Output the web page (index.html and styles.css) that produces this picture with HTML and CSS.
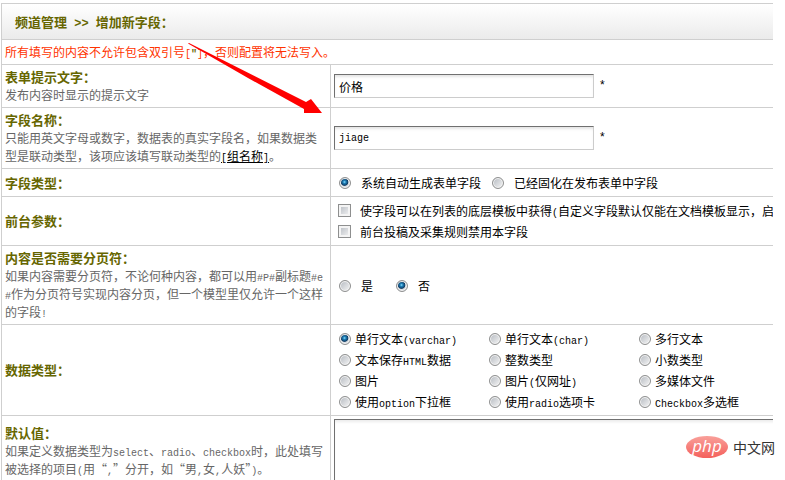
FILE: index.html
```html
<!DOCTYPE html>
<html lang="zh-CN">
<head>
    <meta charset="UTF-8">
    <meta name="viewport" content="width=device-width, initial-scale=1.0">
    <title>增加新字段</title>
    <link rel="stylesheet" href="styles.css">
</head>
<body>
    <form class="sheet">
        <table class="field-table">
            <colgroup>
                <col class="col-label">
                <col>
            </colgroup>
            <thead>
                <tr class="title-row">
                    <th colspan="2">频道管理<span class="en"> &gt;&gt; </span>增加新字段：</th>
                </tr>
            </thead>
            <tbody>
                <tr>
                    <td colspan="2" class="warning">所有填写的内容不允许包含双引号<span class="en">[<b>"</b>]</span>，否则配置将无法写入。</td>
                </tr>
                <tr>
                    <td>
                        <label class="name" for="itemname">表单提示文字：</label>
                        <p>发布内容时显示的提示文字</p>
                    </td>
                    <td><input type="text" class="text" id="itemname" value="价格"> <span class="star">*</span></td>
                </tr>
                <tr>
                    <td>
                        <label class="name" for="fieldname">字段名称：</label>
                        <p>只能用英文字母或数字，数据表的真实字段名，如果数据类型是联动类型，该项应该填写联动类型的<a href="#"><span class="en">[</span>组名称<span class="en">]</span></a>。</p>
                    </td>
                    <td><input type="text" class="text latin" id="fieldname" value="jiage"> <span class="star">*</span></td>
                </tr>
                <tr>
                    <td><span class="name">字段类型：</span></td>
                    <td>
                        <div class="choices">
                            <label class="wide"><input type="radio" name="autofield" checked>系统自动生成表单字段</label>
                            <label class="wide"><input type="radio" name="autofield">已经固化在发布表单中字段</label>
                        </div>
                    </td>
                </tr>
                <tr>
                    <td><span class="name">前台参数：</span></td>
                    <td>
                        <label class="wide"><input type="checkbox" name="islist">使字段可以在列表的底层模板中获得<span class="en">(</span>自定义字段默认仅能在文档模板显示，启</label>
                        <label class="wide"><input type="checkbox" name="notsend">前台投稿及采集规则禁用本字段</label>
                    </td>
                </tr>
                <tr>
                    <td>
                        <span class="name">内容是否需要分页符：</span>
                        <p>如果内容需要分页符，不论何种内容，都可以用<span class="en">#P#</span>副标题<span class="en">#e#</span>作为分页符号实现内容分页，但一个模型里仅允许一个这样的字段<span class="en">!</span></p>
                    </td>
                    <td>
                        <div class="choices yes-no">
                            <label class="wide"><input type="radio" name="spage">是</label>
                            <label class="wide"><input type="radio" name="spage" checked>否</label>
                        </div>
                    </td>
                </tr>
                <tr>
                    <td><span class="name">数据类型：</span></td>
                    <td>
                        <div class="types">
                            <label><input type="radio" name="dtype" checked>单行文本<span class="en">(varchar)</span></label>
                            <label><input type="radio" name="dtype">单行文本<span class="en">(char)</span></label>
                            <label><input type="radio" name="dtype">多行文本</label>
                            <label><input type="radio" name="dtype">文本保存<span class="en">HTML</span>数据</label>
                            <label><input type="radio" name="dtype">整数类型</label>
                            <label><input type="radio" name="dtype">小数类型</label>
                            <label><input type="radio" name="dtype">图片</label>
                            <label><input type="radio" name="dtype">图片<span class="en">(</span>仅网址<span class="en">)</span></label>
                            <label><input type="radio" name="dtype">多媒体文件</label>
                            <label><input type="radio" name="dtype">使用<span class="en">option</span>下拉框</label>
                            <label><input type="radio" name="dtype">使用<span class="en">radio</span>选项卡</label>
                            <label><input type="radio" name="dtype"><span class="en">Checkbox</span>多选框</label>
                        </div>
                    </td>
                </tr>
                <tr>
                    <td>
                        <label class="name" for="vdefault">默认值：</label>
                        <p>如果定义数据类型为<span class="en">select</span>、<span class="en">radio</span>、<span class="en">checkbox</span>时，此处填写被选择的项目<span class="en">(</span>用“<span class="en">,</span>”分开，如“男<span class="en">,</span>女<span class="en">,</span>人妖”<span class="en">)</span>。</p>
                    </td>
                    <td><textarea id="vdefault"></textarea></td>
                </tr>
            </tbody>
        </table>
    </form>

    <svg class="arrow" width="136" height="72" viewBox="0 0 136 72" aria-hidden="true">
        <path d="M0 0.5 L1 0 L118 59 L123 56 L134 70 L116 70 L116 66 L60 35 Z" fill="#ff0000"/>
    </svg>

    <div class="logo">
        <span class="logo-php">php</span>
        <span class="logo-cn">中文网</span>
    </div>
</body>
</html>
```

FILE: styles.css
```css
body { margin: 0; height: 100vh; overflow: hidden; position: relative; background: #fff; color: #000; font: 12px/18px "Noto Sans CJK SC", sans-serif; }
p { margin: 0; color: #666; word-break: break-all; }
a { color: #000; }
.en { font-family: "Liberation Mono", monospace; font-size: 10px; line-height: 1; }

.sheet { margin: 3px 12px 0 1px; overflow: hidden; }
.field-table { width: calc(100% + 60px); table-layout: fixed; border-collapse: separate; border-spacing: 0; border-top: 1px solid #cfcfcf; border-left: 1px solid #cfcfcf; }
.col-label { width: 329px; }
th, td { padding: 3px; text-align: left; vertical-align: middle; border-bottom: 1px solid #cfcfcf; }
td:first-child { border-right: 1px solid #cfcfcf; }
td + td { white-space: nowrap; }
.title-row th { height: 29px; padding-left: 13px; color: #666600; font-size: 13px; background: linear-gradient(#fff, #ebebeb); }
.title-row .en { font-size: 12px; }
.warning { color: #ff3300; }
.warning b { color: #666600; }
.name { display: block; color: #666600; font-size: 13px; font-weight: bold; }

.text { box-sizing: border-box; width: 260px; height: 24px; padding: 0 4px; vertical-align: middle; border: 1px solid #ccc; border-top-color: #707070; border-left-color: #707070; box-shadow: inset 0 3px 3px -1px #e4e4e4; font: 12px "Noto Sans CJK SC", sans-serif; color: #000; }
.text.latin { font: 10px "Liberation Mono", monospace; }
.star { margin-left: 2px; font-family: "Liberation Mono", monospace; }
textarea { display: block; box-sizing: border-box; width: 100%; height: 64px; border: 1px solid #ccc; border-top: 1px solid #707070; border-left: 1px solid #707070; box-shadow: inset 0 3px 3px -1px #ececec; resize: none; }

td label:not(.name) { display: block; height: 21px; line-height: 21px; }
.choices { display: flex; gap: 6px; }
.yes-no { gap: 18px; }
.types { display: grid; grid-template-columns: repeat(3, 150px); }

/* glossy radio and tick box */
input[type="radio"], input[type="checkbox"] { appearance: none; box-sizing: border-box; width: 12px; height: 12px; margin: 0 4px 0 5px; vertical-align: -1px; border: 1px solid #8e8f8f; box-shadow: inset 0 0 0 1px #f4f4f4; background: linear-gradient(135deg, #b4b9c0, #f6f6f6); }
input[type="radio"] { border-radius: 50%; }
input[type="radio"]:checked { background: radial-gradient(circle at 45% 40%, #8fe0ff 0, #1c7fb8 18%, #123c63 42%, #d8dde2 52%); }
input[type="checkbox"] { width: 13px; height: 13px; margin-left: 4px; box-shadow: inset 0 0 0 2px #f4f4f4; }
.wide input[type="radio"] { margin-right: 10px; }
.wide input[type="checkbox"] { margin-right: 9px; }

.arrow { position: absolute; left: 188px; top: 43px; }
.logo { position: absolute; right: 10px; bottom: 22px; display: flex; align-items: center; gap: 5px; }
.logo-php { width: 42px; height: 22px; border-radius: 50%; background: linear-gradient(#f9a09a, #f4605c); color: #fff; font: italic 17px/19px "Open Sans", sans-serif; text-align: center; }
.logo-cn { color: #333; font-size: 14px; line-height: 22px; }
```
